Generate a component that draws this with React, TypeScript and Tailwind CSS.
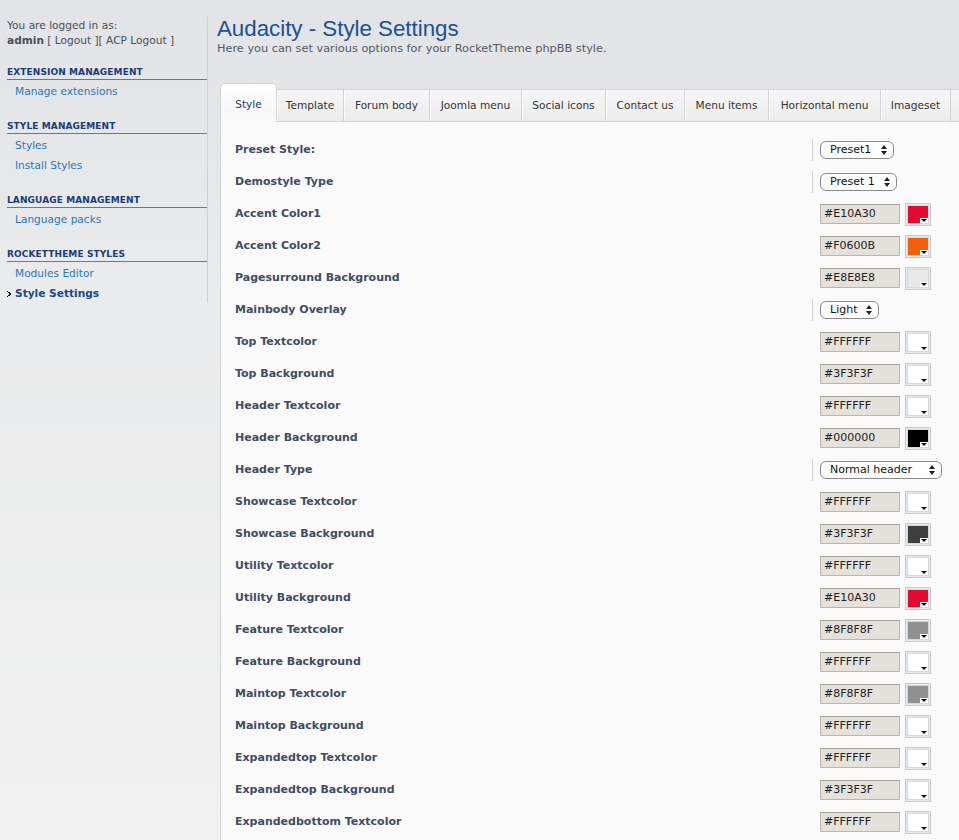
import React from "react";

type Row =
  | { label: string; kind: "select"; value: string; w: number }
  | { label: string; kind: "color"; value: string; swatch: string };

const rows: Row[] = [
  { label: "Preset Style:", kind: "select", value: "Preset1", w: 74 },
  { label: "Demostyle Type", kind: "select", value: "Preset 1", w: 77 },
  { label: "Accent Color1", kind: "color", value: "#E10A30", swatch: "#E10A30" },
  { label: "Accent Color2", kind: "color", value: "#F0600B", swatch: "#F0600B" },
  { label: "Pagesurround Background", kind: "color", value: "#E8E8E8", swatch: "#E8E8E8" },
  { label: "Mainbody Overlay", kind: "select", value: "Light", w: 59 },
  { label: "Top Textcolor", kind: "color", value: "#FFFFFF", swatch: "#FFFFFF" },
  { label: "Top Background", kind: "color", value: "#3F3F3F", swatch: "#FFFFFF" },
  { label: "Header Textcolor", kind: "color", value: "#FFFFFF", swatch: "#FFFFFF" },
  { label: "Header Background", kind: "color", value: "#000000", swatch: "#000000" },
  { label: "Header Type", kind: "select", value: "Normal header", w: 122 },
  { label: "Showcase Textcolor", kind: "color", value: "#FFFFFF", swatch: "#FFFFFF" },
  { label: "Showcase Background", kind: "color", value: "#3F3F3F", swatch: "#3F3F3F" },
  { label: "Utility Textcolor", kind: "color", value: "#FFFFFF", swatch: "#FFFFFF" },
  { label: "Utility Background", kind: "color", value: "#E10A30", swatch: "#E10A30" },
  { label: "Feature Textcolor", kind: "color", value: "#8F8F8F", swatch: "#8F8F8F" },
  { label: "Feature Background", kind: "color", value: "#FFFFFF", swatch: "#FFFFFF" },
  { label: "Maintop Textcolor", kind: "color", value: "#8F8F8F", swatch: "#8F8F8F" },
  { label: "Maintop Background", kind: "color", value: "#FFFFFF", swatch: "#FFFFFF" },
  { label: "Expandedtop Textcolor", kind: "color", value: "#FFFFFF", swatch: "#FFFFFF" },
  { label: "Expandedtop Background", kind: "color", value: "#3F3F3F", swatch: "#FFFFFF" },
  { label: "Expandedbottom Textcolor", kind: "color", value: "#FFFFFF", swatch: "#FFFFFF" },
];

const tabs: { name: string; w: number }[] = [
  { name: "Template", w: 67 },
  { name: "Forum body", w: 86 },
  { name: "Joomla menu", w: 92 },
  { name: "Social icons", w: 84 },
  { name: "Contact us", w: 79 },
  { name: "Menu items", w: 84 },
  { name: "Horizontal menu", w: 112 },
  { name: "Imageset", w: 70 },
];

const ui = { fontFamily: '"DejaVu Sans", Verdana, sans-serif' };

function UpDown() {
  return (
    <svg width="6" height="10" viewBox="0 0 6 10" className="shrink-0">
      <polygon points="0,4 3,0 6,4" fill="#222" />
      <polygon points="0,6 3,10 6,6" fill="#222" />
    </svg>
  );
}

function Section({ title, children }: { title: string; children: React.ReactNode }) {
  return (
    <div className="mt-[18px]">
      <div className="h-[15px] leading-[15px] border-b border-[#4f7fb0] text-[9px] font-bold text-[#1b3c78] tracking-[0.1px]">
        {title}
      </div>
      <div className="mt-[1px]">{children}</div>
    </div>
  );
}

function Item({ children, active }: { children: React.ReactNode; active?: boolean }) {
  return (
    <div className="relative h-[20px] leading-[21px] pl-[8px] text-[10.6px]">
      {active && (
        <svg width="4" height="6" viewBox="0 0 4 6" className="absolute left-0 top-[8px]">
          <rect x="0" y="0" width="1" height="1" fill="#111" />
          <rect x="1" y="1" width="2" height="1" fill="#111" />
          <rect x="2" y="2" width="2" height="2" fill="#111" />
          <rect x="1" y="4" width="2" height="1" fill="#111" />
          <rect x="0" y="5" width="1" height="1" fill="#111" />
        </svg>
      )}
      <span className={active ? "font-bold text-[#1a4a8a]" : "text-[#2a78b8]"}>{children}</span>
    </div>
  );
}

export default function App() {
  return (
    <div
      className="flex w-[959px] h-[840px] overflow-hidden bg-[linear-gradient(to_bottom,#e1e3e6_0px,#eaebec_300px,#f1f1f1_840px)]"
      style={ui}
    >
      {/* Sidebar */}
      <div className="w-[208px] shrink-0">
        <div className="mt-[16px] border-r border-[#cfd1d4] pl-[7px] pt-[1px] h-[286px]">
          <div className="text-[10.6px] leading-[15px] text-[#4a4f57] pt-[1px]">
            <div>You are logged in as:</div>
            <div>
              <span className="font-bold">admin</span> [ Logout ][ ACP Logout ]
            </div>
          </div>
          <div className="-mt-[1px]">
            <Section title="EXTENSION MANAGEMENT">
              <Item>Manage extensions</Item>
            </Section>
            <Section title="STYLE MANAGEMENT">
              <Item>Styles</Item>
              <Item>Install Styles</Item>
            </Section>
            <Section title="LANGUAGE MANAGEMENT">
              <Item>Language packs</Item>
            </Section>
            <Section title="ROCKETTHEME STYLES">
              <Item>Modules Editor</Item>
              <Item active>Style Settings</Item>
            </Section>
          </div>
        </div>
      </div>

      {/* Main */}
      <div className="flex-1 min-w-0 pl-[9px] flex flex-col">
        <h1
          className="mt-[16px] h-[26px] leading-[26px] text-[22.3px] text-[#20508f]"
          style={{ fontFamily: '"Liberation Sans", Arial, sans-serif' }}
        >
          Audacity - Style Settings
        </h1>
        <p className="h-[14px] leading-[14px] text-[11.3px] text-[#555a62]">
          Here you can set various options for your RocketTheme phpBB style.
        </p>

        <div className="ml-[3px] mt-[27px] flex flex-col flex-1">
          {/* Tabs */}
          <div className="flex items-end h-[39px]">
            <div className="w-[57px] h-[39px] rounded-t-[5px] border border-b-0 border-[#d3d3d3] bg-[linear-gradient(to_bottom,#ffffff,#f7f7f7_70%,#fafafa)] flex items-center justify-center text-[10.6px] text-[#26406a] pt-[4px]">
              Style
            </div>
            {tabs.map((t) => (
              <div
                key={t.name}
                className="h-[33px] shrink-0 border-t border-b border-r border-[#d4d4d4] bg-[linear-gradient(to_bottom,#f6f6f6,#ececec)] flex items-center justify-center text-[10.6px] text-[#333] shadow-[inset_1px_0_0_#fbfbfb]"
                style={{ width: t.w }}
              >
                {t.name}
              </div>
            ))}
            <div className="h-[33px] flex-1 border-t border-b border-[#d4d4d4] bg-[linear-gradient(to_bottom,#f6f6f6,#ececec)]" />
          </div>

          {/* Panel */}
          <div className="flex-1 border-l border-[#d3d3d3] bg-[#fafafa] pt-[12px]">
            {rows.map((r) => (
              <div key={r.label} className="flex items-center h-[32px]">
                <div className="flex-1 pl-[14px] text-[11px] font-bold text-[#3f4c63]">{r.label}</div>
                <div className="w-[147px] shrink-0 flex items-center">
                  {r.kind === "select" ? (
                    <>
                      <div className="w-px h-[22px] bg-[#d2d2d2]" />
                      <div
                        className="ml-[7px] h-[18px] rounded-[6px] border border-[#8a8a8a] bg-white flex items-center justify-between pl-[9px] pr-[6px] text-[11px] text-[#111]"
                        style={{ width: r.w }}
                      >
                        <span>{r.value}</span>
                        <UpDown />
                      </div>
                    </>
                  ) : (
                    <div className="flex items-center pl-[8px]">
                      <div className="w-[80px] h-[20px] border border-[#b8b5ae] border-t-[#a9a6a0] bg-[#e4e1da] pl-[3px] text-[11px] leading-[18px] text-[#222]">
                        {r.value}
                      </div>
                      <div className="ml-[5px] w-[26px] h-[23px] border border-[#c9c9c9] bg-[#e9e9e9] p-[1px]">
                        <div
                          className="relative w-full h-full border border-[#d8d8d8]"
                          style={{ backgroundColor: r.swatch }}
                        >
                          <div className="absolute right-0 bottom-0 w-[8px] h-[5px] bg-white flex items-center justify-center">
                            <svg width="6" height="3" viewBox="0 0 6 3">
                              <polygon points="0,0 6,0 3,3" fill="#111" />
                            </svg>
                          </div>
                        </div>
                      </div>
                    </div>
                  )}
                </div>
              </div>
            ))}
          </div>
        </div>
      </div>
    </div>
  );
}
